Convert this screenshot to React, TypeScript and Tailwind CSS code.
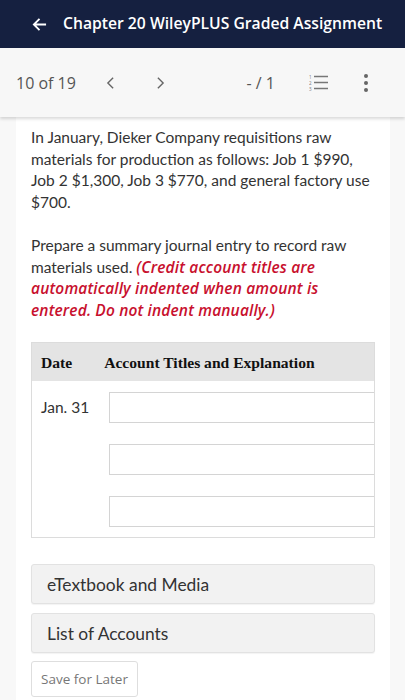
import React from "react";

const openSans = { fontFamily: '"Open Sans", "Noto Sans", sans-serif' };

function ChevronLeft() {
  return (
    <svg viewBox="0 0 10 16" className="w-[9px] h-[14px]" fill="none" stroke="#666" strokeWidth="1.6">
      <path d="M8 2 L2 8 L8 14" />
    </svg>
  );
}

function ChevronRight() {
  return (
    <svg viewBox="0 0 10 16" className="w-[9px] h-[14px]" fill="none" stroke="#666" strokeWidth="1.6">
      <path d="M2 2 L8 8 L2 14" />
    </svg>
  );
}

function NumberedList() {
  return (
    <svg viewBox="0 0 20 18" className="w-[20px] h-[18px]" fill="none">
      <text x="0" y="4.5" fontSize="4.5" fill="#777" fontFamily="Open Sans">1</text>
      <text x="0" y="10.5" fontSize="4.5" fill="#777" fontFamily="Open Sans">2</text>
      <text x="0" y="16.5" fontSize="4.5" fill="#777" fontFamily="Open Sans">3</text>
      <path d="M5 2.5 H19 M5 8.5 H19 M5 14.5 H19" stroke="#777" strokeWidth="1.6" />
    </svg>
  );
}

function AnswerInput() {
  return <div className="h-[31px] w-[300px] shrink-0 border border-[#d4d4d4] bg-white" />;
}

export default function App() {
  return (
    <div className="w-[405px] h-[700px] overflow-hidden bg-[#f8f8f8]">
      <div className="h-12 bg-[#152040] flex items-center pl-[32px]">
        <svg viewBox="0 0 16 16" className="w-[15px] h-[15px]" fill="none" stroke="white" strokeWidth="2">
          <path d="M15 8 H2 M8 2 L2 8 L8 14" />
        </svg>
        <span className="ml-[16px] text-white text-[15.7px] font-semibold" style={openSans}>
          Chapter 20 WileyPLUS Graded Assignment
        </span>
      </div>

      <div className="relative z-10 h-[69px] bg-[#f7f7f7] shadow-[0_2px_3px_rgba(0,0,0,0.15)] flex items-center pl-4 pr-[37px] text-[#555]" style={openSans}>
        <span className="text-[16px]">10 of 19</span>
        <span className="ml-[30px]"><ChevronLeft /></span>
        <span className="ml-[41px]"><ChevronRight /></span>
        <span className="ml-auto text-[16px]">- / 1</span>
        <span className="ml-[34px]"><NumberedList /></span>
        <span className="ml-[35px] flex flex-col gap-[3px]">
          <span className="w-[4px] h-[4px] rounded-full bg-[#666]" />
          <span className="w-[4px] h-[4px] rounded-full bg-[#666]" />
          <span className="w-[4px] h-[4px] rounded-full bg-[#666]" />
        </span>
      </div>

      <div className="ml-4 mr-[15px] bg-white px-[15px] pt-[10px] pb-8 text-[#333] text-[15.5px] leading-[21.6px]" style={{ fontFamily: 'Lato, "Liberation Sans", sans-serif' }}>
        <p>
          In January, Dieker Company requisitions raw materials for production as follows: Job 1 $990, Job 2 $1,300, Job 3 $770, and general factory use $700.
        </p>
        <p className="mt-[21.6px]">
          Prepare a summary journal entry to record raw materials used.{" "}
          <span className="text-[#c8102e] italic font-semibold text-[15.5px] tracking-[0.15px]" style={openSans}>
            (Credit account titles are automatically indented when amount is entered. Do not indent manually.)
          </span>
        </p>

        <div className="mt-[21px] border border-[#dcdcdc] overflow-hidden">
          <div className="h-[38px] bg-[#e4e4e4] flex items-center pl-[9px] text-[15.6px] font-bold text-[#111]" style={{ fontFamily: '"Liberation Serif", serif' }}>
            <span>Date</span>
            <span className="ml-[32px]">Account Titles and Explanation</span>
          </div>
          <div className="flex pt-[11px] pb-[10px]">
            <div className="w-[77px] shrink-0 pl-[9px] pt-[5px]">Jan. 31</div>
            <div className="flex flex-col gap-[21px]">
              <AnswerInput />
              <AnswerInput />
              <AnswerInput />
            </div>
          </div>
        </div>

        <div className="mt-[26px] h-[40px] rounded-[3px] bg-[#f2f2f2] border border-[#e2e2e2] shadow-[0_1px_1px_rgba(0,0,0,0.05)] flex items-center pl-[15px] text-[17.4px] text-[#333]">
          eTextbook and Media
        </div>
        <div className="mt-[9px] h-[40px] rounded-[3px] bg-[#f2f2f2] border border-[#e2e2e2] shadow-[0_1px_1px_rgba(0,0,0,0.05)] flex items-center pl-[15px] text-[17.4px] text-[#333]">
          List of Accounts
        </div>
        <div className="mt-[8px] h-[36px] w-[107px] rounded-[3px] border border-[#dedede] bg-white flex items-center justify-center text-[13.5px] text-[#777]" style={openSans}>
          Save for Later
        </div>
      </div>
    </div>
  );
}
